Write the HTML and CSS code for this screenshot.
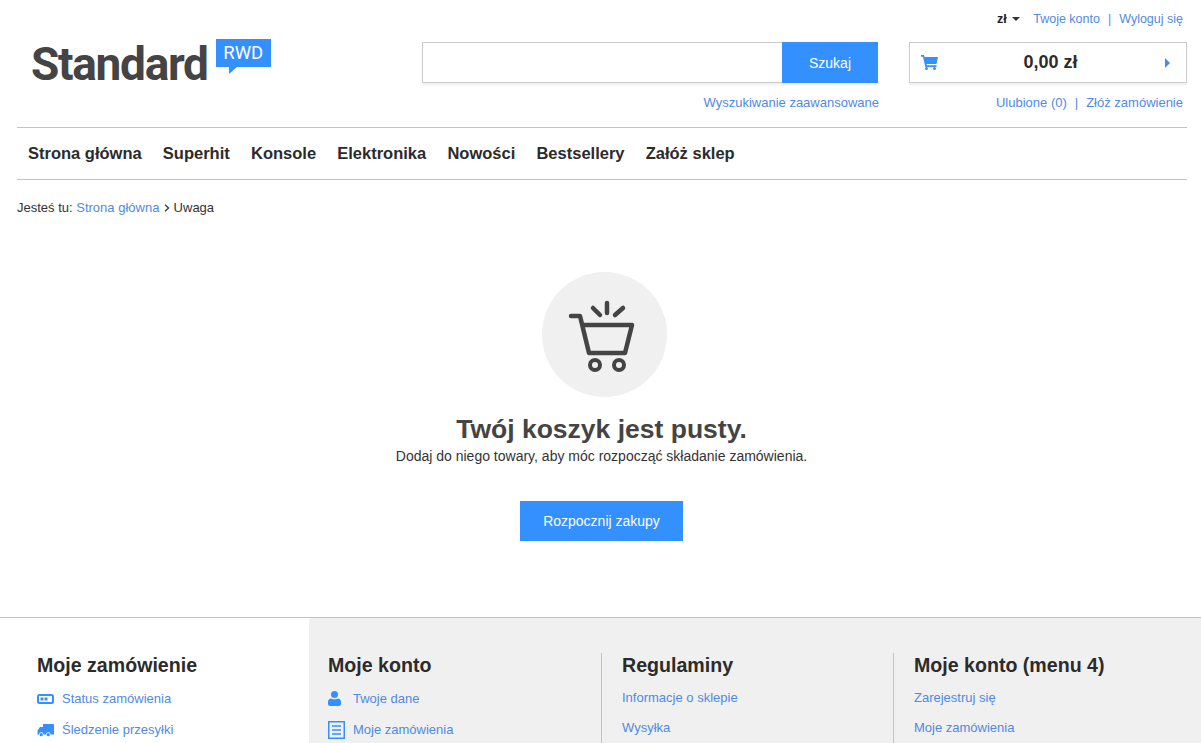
FILE: index.html
```html
<!DOCTYPE html>
<html lang="pl">
<head>
  <meta charset="UTF-8" />
  <title>Standard RWD - Koszyk</title>
  <link rel="stylesheet" href="styles.css">
</head>
<body>

<!-- naglowek -->
<header class="header">
  <div class="top-links">
    <span class="currency">zł <i class="caret-down"></i></span>
    <a href="#">Twoje konto</a>
    <span class="sep">|</span>
    <a href="#">Wyloguj się</a>
  </div>

  <div class="header-row">
    <a class="logo" href="#">
      <span class="logo-name">Standard</span>
      <span class="logo-badge">RWD</span>
    </a>

    <div class="search-col">
      <form class="search">
        <input class="search-input" type="text">
        <button class="search-btn" type="button">Szukaj</button>
      </form>
      <div class="sub-links"><a href="#">Wyszukiwanie zaawansowane</a></div>
    </div>

    <div class="cart-col">
      <div class="cart">
        <svg class="cart-icon" width="17" height="15" viewBox="0 0 17 15">
          <path fill="#3590ff" d="M0 0h3l.5 2H17l-1.500 7H5.500l.3 1.300H15.500V12H4.300L2 1.700H0z"/>
          <circle fill="#3590ff" cx="5.500" cy="13.500" r="1.500"/>
          <circle fill="#3590ff" cx="13.500" cy="13.500" r="1.500"/>
        </svg>
        <span class="cart-sum">0,00 zł</span>
        <i class="caret-right"></i>
      </div>
      <div class="sub-links cart-links">
        <a href="#">Ulubione (0)</a>
        <span class="sep">|</span>
        <a href="#">Złóż zamówienie</a>
      </div>
    </div>
  </div>

  <nav class="menu">
    <a href="#">Strona główna</a>
    <a href="#">Superhit</a>
    <a href="#">Konsole</a>
    <a href="#">Elektronika</a>
    <a href="#">Nowości</a>
    <a href="#">Bestsellery</a>
    <a href="#">Załóż sklep</a>
  </nav>

  <div class="breadcrumb">
    Jesteś tu: <a href="#">Strona główna</a>
    <svg class="crumb-arrow" width="6" height="8" viewBox="0 0 6 8"><path d="M1 .8 4.500 4 1 7.200" fill="none" stroke="#444" stroke-width="1.500"/></svg>
    Uwaga
  </div>
</header>

<!-- pusty koszyk -->
<main class="empty">
  <div class="empty-circle">
    <svg width="125" height="125" viewBox="0 0 125 125" fill="none" stroke="#444" stroke-width="4.500" stroke-linecap="round" stroke-linejoin="round">
      <path d="M29 44h9l9 37h36l7-28H41"/>
      <circle cx="53" cy="93" r="5" stroke-width="4"/>
      <circle cx="77" cy="93" r="5" stroke-width="4"/>
      <path d="M65 31v10M51 36l7 7M81 36l-8 7"/>
    </svg>
  </div>
  <h1 class="empty-title">Twój koszyk jest pusty.</h1>
  <p class="empty-text">Dodaj do niego towary, aby móc rozpocząć składanie zamówienia.</p>
  <a class="empty-btn" href="#">Rozpocznij zakupy</a>
</main>

<!-- stopka -->
<footer class="footer">
  <div class="foot-col foot-first">
    <h3>Moje zamówienie</h3>
    <ul class="foot-list with-icons">
      <li>
        <svg width="17" height="10" viewBox="0 0 17 10"><rect x="1" y="1" width="15" height="8" rx="1.500" fill="none" stroke="#3590ff" stroke-width="2"/><path fill="#3590ff" d="M3.500 3.500h3v3h-3zM7.500 3.500h3v3h-3z"/></svg>
        <a href="#">Status zamówienia</a>
      </li>
      <li>
        <svg width="17" height="14" viewBox="0 0 17 14"><path fill="#3590ff" d="M6 1h10a1 1 0 0 1 1 1v9.500h-3.500a2.200 2.200 0 0 0-4.400 0H6.500a2.200 2.200 0 0 0-4.400 0H.5V7.500L3 4h3z"/><circle fill="#3590ff" cx="4.300" cy="11.700" r="1.600"/><circle fill="#3590ff" cx="11.300" cy="11.700" r="1.600"/></svg>
        <a href="#">Śledzenie przesyłki</a>
      </li>
    </ul>
  </div>
  <div class="foot-col foot-second">
    <h3>Moje konto</h3>
    <ul class="foot-list with-icons">
      <li>
        <svg width="17" height="15" viewBox="0 0 17 15"><circle fill="#3590ff" cx="6.500" cy="3.500" r="3.500"/><path fill="#3590ff" d="M0 13V10.500C0 8.500 2 7.500 3 7.500c1 1 6 1 7 0 1 0 3 1 3 3V13a2 2 0 0 1-2 2H2a2 2 0 0 1-2-2z"/></svg>
        <a href="#">Twoje dane</a>
      </li>
      <li>
        <svg width="17" height="18" viewBox="0 0 17 18"><rect x=".75" y=".75" width="15.500" height="16.500" fill="none" stroke="#3590ff" stroke-width="1.500"/><path stroke="#3590ff" stroke-width="1.500" d="M4 5h9M4 9h9M4 13h9"/></svg>
        <a href="#">Moje zamówienia</a>
      </li>
    </ul>
  </div>
  <div class="foot-col foot-third">
    <h3>Regulaminy</h3>
    <ul class="foot-list">
      <li><a href="#">Informacje o sklepie</a></li>
      <li><a href="#">Wysyłka</a></li>
    </ul>
  </div>
  <div class="foot-col foot-fourth">
    <h3>Moje konto (menu 4)</h3>
    <ul class="foot-list">
      <li><a href="#">Zarejestruj się</a></li>
      <li><a href="#">Moje zamówienia</a></li>
    </ul>
  </div>
</footer>

</body>
</html>
```

FILE: styles.css
```css
html, body {
  margin: 0;
  padding: 0;
  height: 743px;
  overflow: hidden;
}

body {
  background: #fff;
  color: #333;
  font-family: "Liberation Sans", Arial, sans-serif;
  font-size: 13px;
}

a {
  color: #4f8ae6;
  text-decoration: none;
}

.sep {
  color: #4f8ae6;
}

/* naglowek */
.header {
  padding: 0 14px 0 17px;
}

.top-links {
  display: flex;
  justify-content: flex-end;
  align-items: center;
  gap: 8px;
  height: 37px;
  padding-right: 4px;
  font-size: 12.500px;
}

.currency {
  margin-right: 5px;
  font-weight: bold;
  color: #222;
}

.caret-down {
  display: inline-block;
  margin-left: 2px;
  vertical-align: 2px;
  border-top: 4px solid #333;
  border-left: 4px solid transparent;
  border-right: 4px solid transparent;
}

.header-row {
  display: flex;
  align-items: flex-start;
  height: 90px;
  border-bottom: 1px solid #c4c4c4;
}

.logo {
  display: flex;
  align-items: flex-start;
  width: 391px;
  padding: 2px 0 0 14px;
  color: #444;
}

.logo-name {
  font-family: Roboto, sans-serif;
  font-size: 46px;
  font-weight: 700;
  letter-spacing: -1.300px;
  line-height: 50px;
}

.logo-badge {
  position: relative;
  width: 55px;
  height: 28px;
  margin-left: 8px;
  background: #3590ff;
  color: #fff;
  font-family: Roboto, sans-serif;
  font-size: 18.500px;
  line-height: 28px;
  text-align: center;
}

.logo-badge::after {
  content: "";
  position: absolute;
  left: 13px;
  top: 28px;
  border-top: 7px solid #3590ff;
  border-right: 8px solid transparent;
}

.search-col {
  width: 456px;
  margin-top: 5px;
}

.search {
  display: flex;
  height: 41px;
  box-shadow: 0 2px 2px #eee;
}

.search-input {
  flex: 1;
  min-width: 0;
  box-sizing: border-box;
  border: 1px solid #ccc;
  border-right: 0;
  outline: 0;
}

.search-btn {
  width: 96px;
  border: 0;
  background: #3590ff;
  color: #fff;
  font-family: "Liberation Sans", Arial, sans-serif;
  font-size: 14px;
}

.sub-links {
  display: flex;
  justify-content: flex-end;
  gap: 8px;
  margin-top: 13px;
  line-height: 14px;
  margin-right: -1px;
}

.cart-col {
  width: 278px;
  margin: 5px 0 0 31px;
}

.cart {
  display: flex;
  align-items: center;
  box-sizing: border-box;
  height: 41px;
  padding: 0 16px 0 11px;
  border: 1px solid #ccc;
  box-shadow: 0 2px 2px #eee;
}

.cart-sum {
  flex: 1;
  margin-left: -2px;
  text-align: center;
  font-size: 18px;
  font-weight: bold;
  color: #2b2b2b;
}

.caret-right {
  border-left: 5px solid #4f8ae6;
  border-top: 5px solid transparent;
  border-bottom: 5px solid transparent;
}

.cart-links {
  margin-right: 4px;
}

.menu {
  display: flex;
  gap: 21.200px;
  align-items: center;
  height: 51px;
  padding-left: 11px;
  border-bottom: 1px solid #c4c4c4;
}

.menu a {
  color: #2b2b2b;
  font-size: 16.500px;
  font-weight: bold;
}

.breadcrumb {
  margin-top: 21px;
  line-height: 14px;
  color: #333;
}

.crumb-arrow {
  margin: 0 0 0 1px;
}

/* pusty koszyk */
.empty {
  display: flex;
  flex-direction: column;
  align-items: center;
  height: 402px;
  padding: 57px 0 0 2px;
  box-sizing: border-box;
}

.empty-circle {
  width: 125px;
  height: 125px;
  margin-left: 6px;
  border-radius: 50%;
  background: #f0f0f0;
}

.empty-title {
  margin: 16px 0 0;
  font-size: 26.500px;
  line-height: 32px;
  font-weight: bold;
  color: #444;
}

.empty-text {
  margin: 2px 0 0;
  font-size: 14px;
  line-height: 18px;
  color: #333;
}

.empty-btn {
  display: block;
  width: 163px;
  margin-top: 36px;
  background: #3590ff;
  color: #fff;
  font-size: 14px;
  line-height: 40px;
  text-align: center;
}

/* stopka */
.footer {
  display: flex;
  box-sizing: border-box;
  height: 126px;
  overflow: hidden;
  border-top: 1px solid #c4c4c4;
  background: #f0f0f0;
}

.foot-col {
  box-sizing: border-box;
  padding-top: 35px;
}

.foot-col h3 {
  margin: 0;
  font-size: 19.600px;
  line-height: 24px;
  color: #2b2b2b;
}

.foot-first {
  width: 309px;
  padding-left: 37px;
  background: #fff;
}

.foot-second {
  width: 292px;
  padding-left: 19px;
}

.foot-third {
  width: 292px;
  padding-left: 20px;
  border-left: 1px solid #c4c4c4;
  margin-top: 35px;
  padding-top: 0;
}

.foot-fourth {
  flex: 1;
  padding-left: 20px;
  border-left: 1px solid #c4c4c4;
  margin-top: 35px;
  padding-top: 0;
}

.foot-list {
  margin: 5px 0 0;
  padding: 0;
  list-style: none;
}

.foot-list li {
  display: flex;
  align-items: center;
  height: 30px;
}

.with-icons {
  margin-top: 6px;
}

.with-icons li {
  height: 31px;
}

.with-icons svg {
  flex: none;
  margin-right: 8px;
}
```
